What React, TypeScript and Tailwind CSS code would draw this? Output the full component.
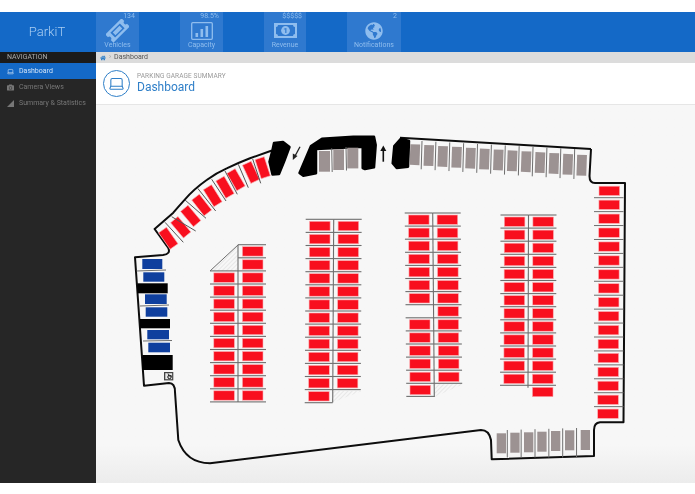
import React from 'react';
import { Laptop } from 'lucide-react';
import { FaCamera, FaGlobeAmericas, FaHome } from 'react-icons/fa';

const RED = '#f80f1e';
const BLUE = '#0f3f9e';
const GREY = '#9c9292';
const LINE = '#6e6e6e';

const range = (from: number, to: number) => Array.from({ length: to - from + 1 }, (_, i) => from + i);

function Slot({ x, y, w, h, fill = RED, angle = 0 }: { x: number; y: number; w: number; h: number; fill?: string; angle?: number }) {
  return (
    <rect
      x={x}
      y={y}
      width={w}
      height={h}
      fill={fill}
      stroke={fill === RED ? '#fbb0b4' : 'none'}
      strokeWidth={fill === RED ? 0.6 : 0}
      transform={angle ? `rotate(${angle} ${x + w / 2} ${y + h / 2})` : undefined}
    />
  );
}

type ColumnProps = {
  vx: number;
  top: number;
  bottom: number;
  rows: number;
  drift: number;
  left: number[];
  right: number[];
  leftLines: number[];
  rightLines: number[];
};

// one double row of bays with its centre line
function Column({ vx, top, bottom, rows, drift, left, right, leftLines, rightLines }: ColumnProps) {
  const pitch = 13.1;
  const dx = (i: number) => (drift * i) / rows;
  return (
    <g>
      <line x1={vx} y1={top} x2={vx + drift} y2={bottom} stroke={LINE} strokeWidth={1.1} />
      {leftLines.map((i) => (
        <line key={`ll${i}`} x1={vx - 28 + dx(i)} y1={top + pitch * i} x2={vx + dx(i)} y2={top + pitch * i} stroke={LINE} strokeWidth={1.1} />
      ))}
      {rightLines.map((i) => (
        <line key={`rl${i}`} x1={vx + dx(i)} y1={top + pitch * i} x2={vx + 28 + dx(i)} y2={top + pitch * i} stroke={LINE} strokeWidth={1.1} />
      ))}
      {left.map((i) => (
        <Slot key={`l${i}`} x={vx - 24.2 + dx(i)} y={top + pitch * i + 2} w={20.6} h={9.4} />
      ))}
      {right.map((i) => (
        <Slot key={`r${i}`} x={vx + 4.4 + dx(i)} y={top + pitch * i + 2} w={20.6} h={9.4} />
      ))}
    </g>
  );
}

const curveSlots = [
  [168.3, 238.3, 55],
  [180.7, 227.3, 50],
  [190.7, 216, 50],
  [201.7, 205, 52],
  [212.7, 195.7, 58],
  [225, 187.3, 60],
  [236, 179.7, 60],
  [251, 172.3, 65],
  [262.7, 167.7, 72],
];

const curveLines = [
  [165, 222.3, 183.3, 242.3],
  [171.7, 216.7, 195.7, 231],
  [185, 200, 206, 218.3],
  [197.7, 188.3, 215.7, 211],
  [211.7, 179.3, 226, 201],
  [225, 171, 237.3, 194.3],
  [238.3, 164.3, 248.3, 187.7],
  [252.7, 159, 260.7, 183.3],
];

const blueSlots = [
  [142.3, 259, 20, 10],
  [143.3, 272.3, 21, 9.4],
  [145, 294.3, 21.7, 9.7],
  [145.7, 307.3, 21.6, 9.4],
  [147.3, 330, 21.7, 9.3],
  [148.3, 342.7, 21.7, 9.6],
];

const blackBars = [
  [137.3, 283.3, 30.4, 10],
  [140, 319, 30, 9.3],
  [142.3, 355, 30.4, 15],
];

const bottomSlots = [
  [496.7, 433.3],
  [510.3, 432.7],
  [524, 432.3],
  [537.3, 431.7],
  [551, 431],
  [565, 430.3],
  [580.7, 430],
];

const wall =
  'M591 149 L400 137.7 M591 149 L589.5 176 Q589.5 183 595 183 L625 183 L623.5 422.3 L600 422.3 Q594 423 594 430 L594 456 L491.7 459.3 L491 440 Q489 430 481 430 L210 463.3 Q186 463 178.3 440 L175 392 Q175 383 169 383 L144 385.7 L135 257.3 L163 255 Q171 254 168.3 248 L154.6 229 L173.3 212.7 Q178 207 185 199.3 Q194 189 206.7 180 Q216 173 226.7 168.3 Q238 163 250 158.3 L273.3 150';

function FloorPlan() {
  return (
    <svg viewBox="96 105 599 378" className="block w-full h-full">
      <defs>
        <pattern id="hatch" width="3" height="3" patternUnits="userSpaceOnUse" patternTransform="rotate(45)">
          <line x1="0" y1="0" x2="0" y2="3" stroke="#cfcfcf" strokeWidth="0.8" />
        </pattern>
      </defs>

      <path d={wall} fill="none" stroke="#0d0d0d" strokeWidth={2} strokeLinejoin="round" />

      {/* entrance blocks */}
      <g fill="#000" stroke="#000" strokeWidth={2.5} strokeLinejoin="round">
        <polygon points="272.5,150 274,143 283,142 289.5,147 284,161.7 279,174 272.5,174.5 269.5,161.7" />
        <polygon points="299.5,173 311,146 322,138.7 353.3,136.7 374,136.7 375.7,145 374,167.3 365,169 362.7,168 362.7,146.7 316,149 316,173.3 303.3,175.7" />
        <polygon points="392.7,163.3 394.3,146 401,138.7 409,141 408,166.7 396.7,168" />
      </g>
      <path d="M300 146.7 L294.5 157" stroke="#222" strokeWidth={1.3} />
      <polygon fill="#222" points="292.8,160 292.8,153.5 297.5,156" />
      <path d="M383.3 150 L383.3 161.7" stroke="#111" strokeWidth={1.6} />
      <polygon fill="#111" points="383.3,145.5 380.3,151 386.3,151" />

      {/* grey bays in the entrance */}
      <Slot x={319} y={151} w={11} h={20.7} fill={GREY} />
      <Slot x={333.3} y={149.3} w={10.7} h={20.7} fill={GREY} />
      <Slot x={347.3} y={147.7} w={11} h={20.7} fill={GREY} />
      <line x1={331.7} y1={148.3} x2={332.2} y2={172} stroke={LINE} />
      <line x1={346} y1={147} x2={346.5} y2={170.5} stroke={LINE} />

      {/* top row */}
      {range(0, 12).map((i) => (
        <Slot key={i} x={410 + 13.9 * i} y={144.3 + 0.88 * i} w={9.8} h={20.7} fill={GREY} angle={2} />
      ))}
      {range(0, 11).map((i) => (
        <line key={i} x1={422 + 13.88 * i} y1={141 + 0.73 * i} x2={421.2 + 13.88 * i} y2={169.3 + 0.88 * i} stroke={LINE} />
      ))}

      {/* curved row */}
      {curveSlots.map(([x, y, a], i) => (
        <Slot key={i} x={x - 10} y={y - 4.8} w={20} h={9.6} angle={a} />
      ))}
      {curveLines.map(([a, b, c, d], i) => (
        <line key={i} x1={a} y1={b} x2={c} y2={d} stroke="#555" strokeWidth={1} />
      ))}

      {/* left side */}
      {blueSlots.map(([x, y, w, h], i) => (
        <Slot key={i} x={x} y={y} w={w} h={h} fill={BLUE} />
      ))}
      {blackBars.map(([x, y, w, h], i) => (
        <rect key={i} x={x} y={y} width={w} height={h} fill="#000" />
      ))}
      <line x1={136.5} y1={271} x2={166} y2={270} stroke={LINE} />
      <line x1={140} y1={306} x2={169} y2={305} stroke={LINE} />
      <line x1={143} y1={341} x2={172} y2={340.5} stroke={LINE} />
      <rect x={164} y={372} width={9.3} height={8.4} fill="#444" />
      <rect x={165.3} y={373.2} width={6.8} height={6} fill="#e8e8e8" />
      <circle cx={169.5} cy={377} r={1.7} fill="none" stroke="#111" strokeWidth={1} />
      <path d="M168 373.5 L169 376 L172 376" fill="none" stroke="#111" strokeWidth={0.8} />

      {/* hatched corners */}
      <polygon points="210,271 238,245 238,271" fill="url(#hatch)" />
      <line x1={210} y1={271} x2={238} y2={245} stroke={LINE} />
      <polygon points="333,402.3 362,391 333,391" fill="url(#hatch)" />
      <polygon points="434.5,397 463,384.3 434.5,384.3" fill="url(#hatch)" />

      <Column vx={238} top={244.7} bottom={402} rows={12} drift={0} left={range(2, 11)} right={range(0, 11)} leftLines={range(2, 12)} rightLines={range(0, 12)} />
      <Column vx={333.7} top={219.3} bottom={402.5} rows={14} drift={-1} left={range(0, 13)} right={range(0, 12)} leftLines={range(0, 14)} rightLines={range(0, 13)} />
      <Column
        vx={432.7}
        top={213}
        bottom={397}
        rows={14}
        drift={1.6}
        left={range(0, 13).filter((i) => i !== 7)}
        right={range(0, 12)}
        leftLines={range(0, 14)}
        rightLines={range(0, 13)}
      />
      <Column vx={528.5} top={215} bottom={387.7} rows={13} drift={-0.5} left={range(0, 12)} right={range(0, 13)} leftLines={range(0, 13)} rightLines={range(0, 13)} />

      {/* right side */}
      {range(0, 16).map((i) => (
        <Slot key={i} x={599 - (1.3 * i) / 16} y={186.2 + 13.93 * i} w={20.6} h={9.3} />
      ))}
      {range(0, 15).map((i) => (
        <line key={i} x1={594} y1={197.7 + 13.93 * i} x2={623.5} y2={197.7 + 13.93 * i} stroke={LINE} />
      ))}

      {/* bottom row */}
      {bottomSlots.map(([x, y], i) => (
        <Slot key={i} x={x} y={y} w={9.3} h={20} fill={GREY} />
      ))}
      {range(0, 5).map((i) => (
        <line key={i} x1={507.3 + 13.85 * i} y1={430 - 0.4 * i} x2={507.3 + 13.85 * i} y2={457.5} stroke={LINE} />
      ))}
    </svg>
  );
}

const TicketIcon = () => (
  <svg viewBox="0 0 24 24" className="w-[23px] h-[23px] text-[#8fbdee]">
    <g transform="rotate(-45 12 12)">
      <path
        fillRule="evenodd"
        fill="currentColor"
        d="M0 6 H24 V10 A2 2 0 0 0 24 14 V18 H0 V14 A2 2 0 0 0 0 10 Z M5 8.5 V15.5 H19 V8.5 Z"
      />
      <rect x="7" y="10" width="10" height="4" fill="currentColor" />
    </g>
  </svg>
);

const ChartIcon = () => (
  <svg viewBox="0 0 22 18" className="w-[22px] h-[18px] text-[#8fbdee]">
    <rect x="0.7" y="0.7" width="20.6" height="16.6" rx="1" fill="none" stroke="currentColor" strokeWidth="1.3" />
    <rect x="4.5" y="11" width="2.6" height="4" fill="currentColor" />
    <rect x="9.5" y="7" width="2.6" height="8" fill="currentColor" />
    <rect x="14.5" y="4" width="2.6" height="11" fill="currentColor" />
  </svg>
);

const BillIcon = () => (
  <svg viewBox="0 0 23 15" className="w-[23px] h-[15px] text-[#8fbdee]">
    <path
      fillRule="evenodd"
      fill="currentColor"
      d="M0 0 H23 V15 H0 Z M4 2 Q4 4 2 4 V11 Q4 11 4 13 H19 Q19 11 21 11 V4 Q19 4 19 2 Z"
    />
    <circle cx="11.5" cy="7.5" r="4.4" fill="currentColor" />
    <text x="11.5" y="10.3" textAnchor="middle" fontSize="8" fontFamily="Roboto, sans-serif" fontWeight="700" fill="#2f79cf">
      1
    </text>
  </svg>
);

function Tile({ value, label, icon, width }: { value: string; label: string; icon: React.ReactNode; width: string }) {
  return (
    <div className={`${width} flex flex-col bg-[#2f79cf] text-[#8fbdee]`}>
      <div className="h-[8px] px-1 text-right text-[7px] leading-[8px]">{value}</div>
      <div className="h-[21px] flex items-center justify-center">{icon}</div>
      <div className="text-center text-[7px] leading-[9px]">{label}</div>
    </div>
  );
}

function Header() {
  return (
    <div className="h-10 flex bg-[#1469c7]">
      <div className="w-24 flex items-center justify-center pb-[1px] pr-[2px] text-[13px] font-light text-[#a9cdf2]">ParkiT</div>
      <div className="flex gap-[41px]">
        <Tile width="w-[43px]" value="134" label="Vehicles" icon={<TicketIcon />} />
        <Tile width="w-[43px]" value="98.5%" label="Capacity" icon={<ChartIcon />} />
        <Tile width="w-[42px]" value="$$$$$" label="Revenue" icon={<BillIcon />} />
        <Tile width="w-[54px]" value="2" label="Notifications" icon={<FaGlobeAmericas className="w-[18px] h-[18px]" />} />
      </div>
    </div>
  );
}

function Sidebar() {
  return (
    <div className="w-24 shrink-0 bg-[#262626] text-[7px]">
      <div className="h-[11px] pl-[7px] bg-[#1b1b1b] text-[#aaaaaa] leading-[11px]">NAVIGATION</div>
      <div className="h-4 flex items-center gap-[5px] pl-[7px] bg-[#1469c7] text-[#cfe2f7]">
        <Laptop className="w-[7px] h-[7px]" />
        <span>Dashboard</span>
      </div>
      <div className="h-4 flex items-center gap-[5px] pl-[7px] text-[#777777]">
        <FaCamera className="w-[7px] h-[7px]" />
        <span>Camera Views</span>
      </div>
      <div className="h-4 flex items-center gap-[5px] pl-[7px] text-[#777777]">
        <svg viewBox="0 0 8 8" className="w-[7px] h-[7px]">
          <polygon points="0,8 8,8 8,0" fill="currentColor" />
        </svg>
        <span>Summary &amp; Statistics</span>
      </div>
    </div>
  );
}

export default function App() {
  return (
    <div className="w-full h-[494px] overflow-hidden flex flex-col pt-3 pb-[11px] bg-white blur-[0.3px] font-['Roboto',sans-serif]">
      <Header />
      <div className="flex-1 min-h-0 flex">
        <Sidebar />
        <div className="flex-1 min-w-0 flex flex-col">
          {/* Breadcrumb */}
          <div className="h-[11px] flex items-center gap-[3px] pl-1 bg-[#dcdcdc] text-[7px] text-[#555555]">
            <FaHome className="w-[6px] h-[6px] text-[#2f7fc8]" />
            <span className="text-[#999999]">›</span>
            <span>Dashboard</span>
          </div>
          {/* Title */}
          <div className="h-[42px] shrink-0 flex items-center gap-[7px] pl-[7px] bg-white border-b border-[#e6e6e6]">
            <div className="w-[27px] h-[27px] rounded-full border border-[#2f7fc8] flex items-center justify-center text-[#2f7fc8]">
              <Laptop className="w-[17px] h-[17px]" strokeWidth={1.5} />
            </div>
            <div>
              <div className="text-[6.5px] leading-[8px] text-[#999999] tracking-[0.1px]">PARKING GARAGE SUMMARY</div>
              <div className="text-[12px] leading-[15px] text-[#2f7fc8]">Dashboard</div>
            </div>
          </div>
          {/* Map */}
          <div className="flex-1 min-h-0 bg-linear-to-b from-[#f7f7f7] from-90% to-[#ececec]">
            <FloorPlan />
          </div>
        </div>
      </div>
    </div>
  );
}
